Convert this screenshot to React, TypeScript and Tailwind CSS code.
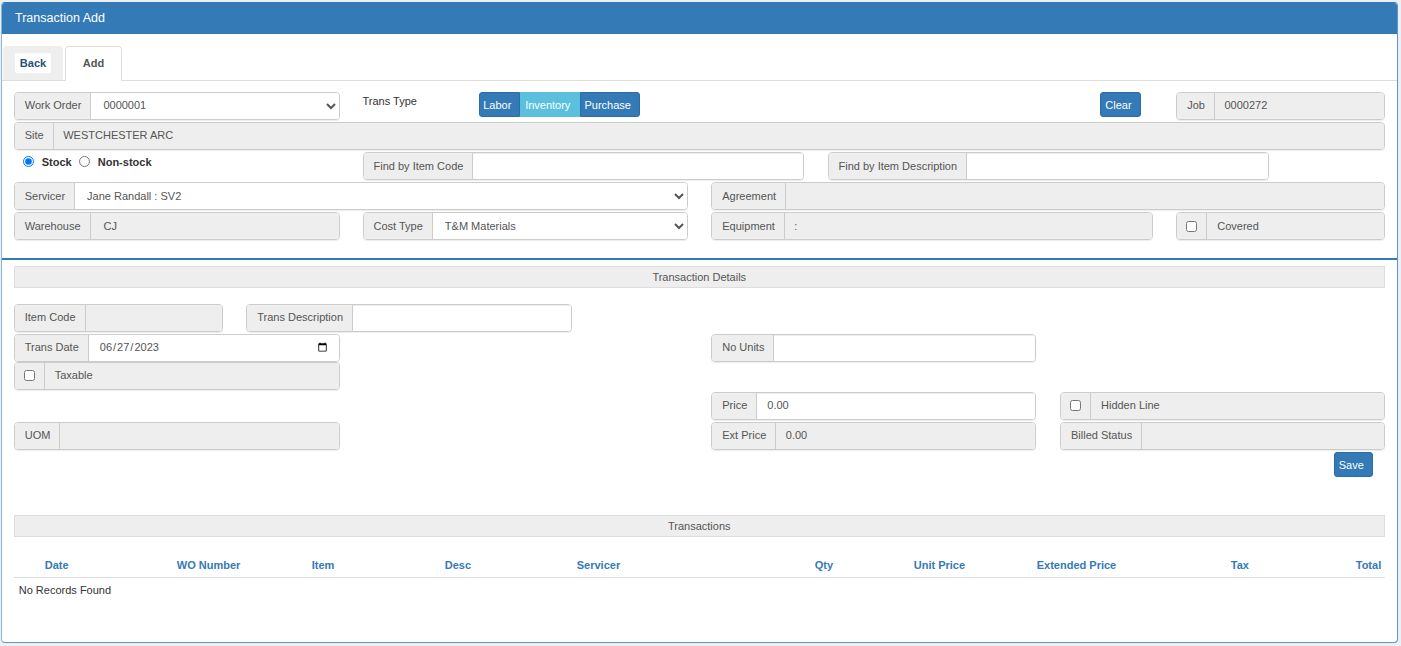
import React from 'react';

const font = "font-['Liberation_Sans',Arial,sans-serif]";

type FieldProps = {
  label: string;
  value?: string;
  kind?: 'readonly' | 'input';
  className?: string;
  inputClass?: string;
};

const groupClass =
  'flex h-[28px] rounded-[4px] border border-[#ccc] shadow-[0_1px_1px_rgba(0,0,0,0.075)] overflow-hidden text-[11px] text-[#555]';
const addonClass = 'flex items-center pl-[10px] pr-[9px] bg-[#eee] border-r border-[#ccc] whitespace-nowrap shrink-0';
// rows whose text sits a pixel higher in the box
const up = '[&>*]:pb-[2px]';
const wide = '-mr-[1px]';

const Field: React.FC<FieldProps> = ({ label, value = '', kind = 'readonly', className = '', inputClass = '' }) => (
  <div className={`${groupClass} ${className}`}>
    <span className={addonClass}>{label}</span>
    {kind === 'readonly' ? (
      <div className={`flex flex-1 items-center bg-[#eee] pl-[9.5px] ${inputClass}`}>{value}</div>
    ) : (
      <input
        type="text"
        defaultValue={value}
        className={`flex-1 min-w-0 bg-white pl-[10px] outline-none shadow-[inset_0_1px_1px_rgba(0,0,0,0.075)] ${inputClass}`}
      />
    )}
  </div>
);

const SelectField: React.FC<{ label: string; value: string; className?: string }> = ({ label, value, className = '' }) => (
  <div className={`${groupClass} ${className}`}>
    <span className={addonClass}>{label}</span>
    <select defaultValue={value} className="flex-1 min-w-0 bg-white pl-[8px] outline-none appearance-auto">
      <option>{value}</option>
    </select>
  </div>
);

const CheckField: React.FC<{ label: string; className?: string }> = ({ label, className = '' }) => (
  <div className={`${groupClass} ${className}`}>
    <span className={`${addonClass} !px-[9px]`}>
      <input type="checkbox" className="w-[11px] h-[11px] m-0" />
    </span>
    <div className="flex flex-1 items-center bg-[#eee] pl-[10px]">{label}</div>
  </div>
);

const SectionBar: React.FC<{ title: string }> = ({ title }) => (
  <div className="flex h-[22px] items-center justify-center border border-[#ddd] bg-[#eee] text-[11px] text-[#555]">
    {title}
  </div>
);

const btn = 'flex h-[25px] items-center justify-center pr-[4px] pt-[2px] bg-[#337ab7] text-[11px] text-white border border-[#2e6da4]';

const columns = [
  { name: 'Date', cls: 'w-[163px] pl-[31px]' },
  { name: 'WO Number', cls: 'w-[135px]' },
  { name: 'Item', cls: 'w-[133px]' },
  { name: 'Desc', cls: 'w-[132px]' },
  { name: 'Servicer', cls: 'w-[238px]' },
  { name: 'Qty', cls: 'w-[99px]' },
  { name: 'Unit Price', cls: 'w-[123px]' },
  { name: 'Extended Price', cls: 'w-[194px]' },
  { name: 'Tax', cls: 'w-[125px]' },
  { name: 'Total', cls: 'w-[29px]' },
];

const App: React.FC = () => {
  return (
    <div className={`${font} h-[646px] overflow-hidden bg-[#ecf0f5] pl-[1px] pr-[3px] pt-[2px]`}>
      <div className="h-[641px] rounded-[4px] border border-[#337ab7] border-l-[#8ab4da] border-b-[#5a97cc] border-r-[#5a97cc] bg-white overflow-hidden">
        <div className="flex h-[31px] items-center bg-[#337ab7] pl-[13px] text-[12.5px] text-white">Transaction Add</div>

        {/* tabs */}
        <div className="mt-[12px] flex h-[35px] items-end gap-[2px] border-b border-[#ddd] pl-[1px]">
          <div className="flex h-[34px] w-[60px] items-center justify-center rounded-t-[4px] bg-[#eee]">
            <span className="rounded-[2px] bg-white px-[5px] py-[2px] text-[11px] font-bold text-[#23527c]">Back</span>
          </div>
          <div className="-mb-px flex h-[35px] w-[57px] items-center justify-center rounded-t-[4px] border border-[#ddd] border-b-white bg-white text-[11px] font-bold text-[#555]">
            Add
          </div>
        </div>

        {/* header form */}
        <div className="mt-[11px] grid grid-cols-12 auto-rows-[28px] gap-x-[24px] gap-y-[2px] pl-[11.75px] pr-[12.25px]">
          <SelectField label="Work Order" value="0000001" className={`col-span-3 ${up} ${wide}`} />
          <div className="col-span-1 text-[11px] leading-[18px] text-[#333]">Trans Type</div>
          <div className="col-span-5 flex items-start">
            <button className={`${btn} w-[41px] rounded-l-[3px]`}>Labor</button>
            <button className={`${btn} w-[60px] !bg-[#5bc0de] !border-[#5bc0de]`}>Inventory</button>
            <button className={`${btn} w-[60px] rounded-r-[3px]`}>Purchase</button>
          </div>
          <div className="col-span-1 flex items-start">
            <button className={`${btn} w-[41px] shrink-0 rounded-[3px] ml-[40px]`}>Clear</button>
          </div>
          <Field label="Job" value="0000272" className={`col-span-2 ${up}`} />

          <Field label="Site" value="WESTCHESTER ARC" className={`col-span-12 ${up}`} />

          <div className="col-span-3 flex items-start gap-[7px] pl-[9px] pt-[2px] text-[11px] font-bold text-[#333]">
            <label className="flex items-center gap-[8px]">
              <input type="radio" name="stock" defaultChecked className="m-0 -mt-[2px] h-[11px] w-[11px]" />
              Stock
            </label>
            <label className="flex items-center gap-[8px]">
              <input type="radio" name="stock" className="m-0 -mt-[2px] h-[11px] w-[11px]" />
              Non-stock
            </label>
          </div>
          <Field label="Find by Item Code" kind="input" className="col-span-4" />
          <Field label="Find by Item Description" kind="input" className="col-span-4" />
          <div className="col-span-1" />

          <SelectField label="Servicer" value="Jane Randall : SV2" className={`col-span-6 ${wide}`} />
          <Field label="Agreement" className="col-span-6" />

          <Field label="Warehouse" value="CJ" className={`col-span-3 ${wide}`} inputClass="!pl-[13px]" />
          <SelectField label="Cost Type" value="T&M Materials" className={`col-span-3 ${wide}`} />
          <Field label="Equipment" value=":" className={`col-span-4 ${wide}`} />
          <CheckField label="Covered" className="col-span-2" />
        </div>

        <div className="mt-[18px] border-t-2 border-[#337ab7]" />

        {/* transaction details */}
        <div className="mt-[6px] pl-[11.75px] pr-[12.25px]">
          <SectionBar title="Transaction Details" />

          <div className="mt-[16px] grid grid-cols-12 gap-x-[24px]">
            <Field label="Item Code" className={`col-span-2 row-start-1 ${up} ${wide}`} />
            <Field label="Trans Description" kind="input" className={`col-span-3 row-start-1 ${up} ${wide}`} />

            <div className={`${groupClass} col-span-3 row-start-2 mt-[2px] ${up} ${wide}`}>
              <span className={addonClass}>Trans Date</span>
              <input
                type="date"
                defaultValue="2023-06-27"
                className="min-w-0 flex-1 bg-white pl-[10px] pr-[9px] outline-none"
              />
            </div>
            <Field label="No Units" kind="input" className={`col-span-3 col-start-7 row-start-2 mt-[2px] ${up}`} />

            <CheckField label="Taxable" className={`col-span-3 col-start-1 row-start-3 ${up} ${wide}`} />

            <Field label="Price" value="0.00" kind="input" className={`col-span-3 col-start-7 row-start-4 mt-[2px] ${up}`} />
            <CheckField label="Hidden Line" className={`col-span-3 col-start-10 row-start-4 mt-[2px] ${up}`} />

            <Field label="UOM" className={`col-span-3 col-start-1 row-start-5 mt-[2px] ${up} ${wide}`} />
            <Field label="Ext Price" value="0.00" className={`col-span-3 col-start-7 row-start-5 mt-[2px] ${up}`} />
            <Field label="Billed Status" className={`col-span-3 col-start-10 row-start-5 mt-[2px] ${up}`} />
          </div>

          <div className="mt-[2px] flex justify-end pr-[12px]">
            <button className={`${btn} w-[39px] rounded-[3px]`}>Save</button>
          </div>

          <div className="mt-[38px]">
            <SectionBar title="Transactions" />
          </div>

          <table className="mt-[20px] w-full table-fixed border-collapse text-[11px]">
            <thead>
              <tr className="border-b border-[#ddd]">
                {columns.map((c) => (
                  <th key={c.name} className={`${c.cls} h-[20px] whitespace-nowrap text-left align-top font-bold text-[#337ab7]`}>
                    {c.name}
                  </th>
                ))}
              </tr>
            </thead>
            <tbody>
              <tr>
                <td colSpan={10} className="h-[25px] pl-[5px] text-[#333]">
                  No Records Found
                </td>
              </tr>
            </tbody>
          </table>
        </div>
      </div>
    </div>
  );
};

export default App;
